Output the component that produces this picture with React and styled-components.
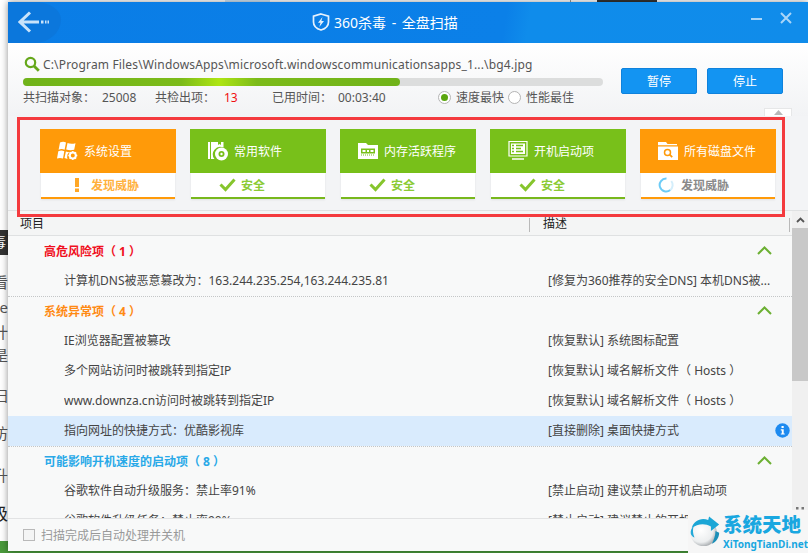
import React from 'react';
import styled, { createGlobalStyle } from 'styled-components';

const FONT = '"Noto Sans", "Noto Sans CJK SC", sans-serif';

const GlobalStyle = createGlobalStyle`
  html, body {
    margin: 0;
    padding: 0;
    background: #fff;
    overflow: hidden;
  }
  * {
    box-sizing: border-box;
  }
`;

const BackIcon = () => (
  <svg width="32" height="22" viewBox="0 0 32 22" fill="none">
    <path d="M12 1.500 2 11l10 9.500M3 11h18" stroke="#c9e3fa" strokeWidth="3" />
    <path d="M23 11h2.500M27 11h1.500M29.500 11h1.500" stroke="#c9e3fa" strokeWidth="3" />
  </svg>
);

const ShieldIcon = () => (
  <svg width="18" height="18" viewBox="0 0 18 18">
    <path d="M9 1 16.500 3.200V9c0 4-3 6.700-7.500 8C4.500 15.700 1.500 13 1.500 9V3.200z" fill="none" stroke="#e4f1fd" strokeWidth="1.700" />
    <path d="M10.500 4 6 9.700h2.500L7.300 14 12 8h-2.600z" fill="#e4f1fd" />
  </svg>
);

const SearchIcon = () => (
  <svg width="16" height="16" viewBox="0 0 16 16" fill="none">
    <circle cx="6.500" cy="6.500" r="4.700" stroke="#66a81c" strokeWidth="2.200" />
    <path d="m10 10 4.800 4.800" stroke="#66a81c" strokeWidth="2.800" />
  </svg>
);

const WindowsIcon = () => (
  <svg width="22" height="20" viewBox="0 0 22 20" fill="#fff">
    <path d="M3 1.500c2-.8 4-1 6 0L7.600 8.700c-2-.8-4-.8-6 0zM10.500 2c2.300.9 5 1.100 8 .2l-1.300 6.600c-2.800.7-5.300.6-8-.2zM1.300 10.200c2-.8 4-.8 6 0L6 17.500c-2-.8-4-.8-6 0zM8.900 10.500c1.300.4 2.300.6 3.300.7l-1.700 2-.4 3.200.4 1.500c-.9-.1-1.900-.4-3-.8z" />
    <circle cx="15.800" cy="14.500" r="3" fill="none" stroke="#fff" strokeWidth="2" />
    <path d="M15.800 10v1.500M15.800 17.500V19M11.300 14.500h1.500M18.800 14.500h1.500M12.600 11.300l1 1M18 16.700l1 1M12.600 17.700l1-1M18 12.300l1-1" stroke="#fff" strokeWidth="1.300" />
  </svg>
);

const DiscIcon = () => (
  <svg width="22" height="22" viewBox="0 0 22 22" fill="#fff">
    <path d="M1 2h2v17H1zM4 2h12.500v5.500a7.500 7.500 0 0 0-9 11.500H4z" />
    <path d="M11 2h3v3l-1.500-1L11 5z" fill="#78c01a" />
    <circle cx="14.500" cy="14" r="6.500" />
    <circle cx="14.500" cy="14" r="3" fill="#78c01a" />
    <circle cx="14.500" cy="14" r="1.200" fill="#fff" />
  </svg>
);

const MemoryIcon = () => (
  <svg width="22" height="18" viewBox="0 0 22 18">
    <path d="M1 1h8l2 2h10v14H1z" fill="#fff" />
    <path d="M4 6.500h14v5H4z" fill="#78c01a" />
    <path d="M5.500 8h3v2h-3zM10 8h2v2h-2zM13.500 8h3v2h-3z" fill="#fff" />
    <path d="M4 13h14" stroke="#78c01a" strokeDasharray="1 1" />
  </svg>
);

const MonitorIcon = () => (
  <svg width="22" height="22" viewBox="0 0 22 22" fill="none">
    <path d="M2 1.500h18v14.500H2z" stroke="#fff" strokeWidth="1.200" />
    <path d="M4 3.500h14v10.500H4z" fill="#fff" />
    <path d="M5 5.500h2M5 8.500h2M5 11.500h2M9 5.500h7M9 8.500h5M9 11.500h7" stroke="#78c01a" strokeWidth="1.500" />
    <path d="M5 19h12" stroke="#fff" strokeWidth="1.500" />
  </svg>
);

const FolderIcon = () => (
  <svg width="22" height="20" viewBox="0 0 22 20">
    <path d="M1 1h8l1.500 2H20v1.200H1z" fill="#fff" />
    <path d="M1 5.500h20V19H1z" fill="#fff" />
    <circle cx="10.500" cy="11.500" r="3" fill="none" stroke="#ff9a09" strokeWidth="1.500" />
    <path d="m12.700 13.700 2.500 2.500" stroke="#ff9a09" strokeWidth="1.800" />
  </svg>
);

const CheckIcon = () => (
  <svg width="17" height="14" viewBox="0 0 17 14" fill="none">
    <path d="m1.500 6.500 5 5 9-10" stroke="#86c52c" strokeWidth="3" />
  </svg>
);

const SpinnerIcon = () => (
  <svg width="16" height="16" viewBox="0 0 16 16" fill="none">
    <path d="M8.500 1.500a6.500 6.500 0 1 0 3.800 11.500" stroke="#6ccbf6" strokeWidth="2" />
    <path d="M12.300 13a6.500 6.500 0 0 0 1-9" stroke="#d4eefb" strokeWidth="2" />
  </svg>
);

const BangIcon = () => (
  <svg width="6" height="14" viewBox="0 0 6 14">
    <path d="M1 0h4v9H1zM1 10.500h4V14H1z" fill="#ffa726" />
  </svg>
);

const ChevronIcon = () => (
  <svg width="15" height="9" viewBox="0 0 15 9" fill="none">
    <path d="m1 8 6.500-6.500L14 8" stroke="#6cb033" strokeWidth="2" />
  </svg>
);

const InfoIcon = () => (
  <svg width="15" height="15" viewBox="0 0 15 15">
    <circle cx="7.500" cy="7.500" r="7.200" fill="#1d8af0" />
    <path d="M6.500 3h2.200v2H6.500zM5.800 6.200h2.900v4.200h1v1.200H5.800v-1.200h1V7.400h-1z" fill="#fff" />
  </svg>
);

const LogoIcon = () => (
  <svg width="35" height="36" viewBox="0 0 35 36">
    <defs>
      <radialGradient id="ball" cx="40%" cy="40%" r="70%">
        <stop offset="0%" stopColor="#ffffff" />
        <stop offset="65%" stopColor="#eceeef" />
        <stop offset="100%" stopColor="#8d9296" />
      </radialGradient>
    </defs>
    <circle cx="16" cy="20" r="14.500" fill="url(#ball)" />
    <path d="M3 15C5 7 13 3 21 6l1-4 11 9-9 7v-5C17 9 9 10 3 15z" fill="#1ba6d6" />
    <path d="M2 21c-.5-3 .5-6 3-8-1 3-1 8 1 12-2-.5-3.500-2-4-4z" fill="#23a9d8" />
    <path d="M29 18l4 2c0 5-3 10-8 12 2-4 4-9 4-14z" fill="#1b8fb8" />
  </svg>
);

const fragments = [
  { top: 272, text: '看' },
  { top: 297, text: 'e' },
  { top: 322, text: '计' },
  { top: 345, text: '是' },
  { top: 385, text: '扫' },
  { top: 423, text: '访' },
  { top: 465, text: '升' },
];

const tiles = [
  { name: '系统设置', Icon: WindowsIcon, tone: 'warn', status: '发现威胁', Mark: BangIcon, indent: 33, gap: 11 },
  { name: '常用软件', Icon: DiscIcon, tone: 'ok', status: '安全', Mark: CheckIcon, indent: 28, gap: 5 },
  { name: '内存活跃程序', Icon: MemoryIcon, tone: 'ok', status: '安全', Mark: CheckIcon, indent: 28, gap: 5 },
  { name: '开机启动项', Icon: MonitorIcon, tone: 'ok', status: '安全', Mark: CheckIcon, indent: 28, gap: 5 },
  { name: '所有磁盘文件', Icon: FolderIcon, tone: 'warn', status: '发现威胁', Mark: SpinnerIcon, indent: 17, gap: 7, pending: true },
];

const groups = [
  {
    title: '高危风险项（ 1 ）',
    colour: '#f0101e',
    items: [
      { name: '计算机DNS被恶意篡改为：163.244.235.254,163.244.235.81', desc: '[修复为360推荐的安全DNS] 本机DNS被...' },
    ],
  },
  {
    title: '系统异常项（ 4 ）',
    colour: '#ff8a14',
    items: [
      { name: 'IE浏览器配置被篡改', desc: '[恢复默认] 系统图标配置' },
      { name: '多个网站访问时被跳转到指定IP', desc: '[恢复默认] 域名解析文件（ Hosts ）' },
      { name: 'www.downza.cn访问时被跳转到指定IP', desc: '[恢复默认] 域名解析文件（ Hosts ）' },
      { name: '指向网址的快捷方式：优酷影视库', desc: '[直接删除] 桌面快捷方式', active: true },
    ],
  },
  {
    title: '可能影响开机速度的启动项（ 8 ）',
    colour: '#29a9e8',
    items: [
      { name: '谷歌软件自动升级服务：禁止率91%', desc: '[禁止启动] 建议禁止的开机启动项' },
      { name: '谷歌软件升级任务：禁止率90%', desc: '[禁止启动] 建议禁止的开机启动项' },
    ],
  },
];

const App = () => (
  <Desktop>
    <GlobalStyle />
    <Behind>
      <TopScrap $left={225} $width={45} $colour="#cfe4f5" />
      <TopScrap $left={570} $width={1} $colour="#999" />
      <TopScrap $left={597} $width={60} $colour="#333" />
      <DarkTab>毒</DarkTab>
      {fragments.map((f) => (
        <Fragment key={f.top} $top={f.top}>{f.text}</Fragment>
      ))}
      <BoldFragment>极</BoldFragment>
      <GreenCorner />
    </Behind>

    <Window>
      <TitleBar>
        <BackButton><BackIcon /></BackButton>
        <Title>
          <ShieldIcon />
          360杀毒 - 全盘扫描
        </Title>
        <WindowControls>
          <MinimizeButton />
          <CloseButton>
            <svg width="12" height="12" viewBox="0 0 12 12" fill="none">
              <path d="m1 1 10 10M11 1 1 11" stroke="#a9d5f8" strokeWidth="2" />
            </svg>
          </CloseButton>
        </WindowControls>
      </TitleBar>

      <ScanPanel>
        <ScanInfo>
          <PathRow>
            <SearchIcon />
            <span>C:\Program Files\WindowsApps\microsoft.windowscommunicationsapps_1...\bg4.jpg</span>
          </PathRow>
          <ProgressTrack>
            <ProgressFill style={{ width: `${(377 / 580) * 100}%` }} />
          </ProgressTrack>
          <StatsRow>
            <Stat $width={79}>共扫描对象：</Stat>
            <Stat $width={53}>25008</Stat>
            <Stat $width={69}>共检出项：</Stat>
            <Stat $width={48} $alert>13</Stat>
            <Stat $width={66}>已用时间：</Stat>
            <Stat $width={100}>00:03:40</Stat>
            <Radio $on />
            <RadioLabel>速度最快</RadioLabel>
            <Radio />
            <RadioLabel>性能最佳</RadioLabel>
          </StatsRow>
        </ScanInfo>
        <ScanActions>
          <ActionButton>暂停</ActionButton>
          <ActionButton>停止</ActionButton>
        </ScanActions>
        <CollapseTab>
          <svg width="9" height="5" viewBox="0 0 9 5"><path d="M4.500 0 9 5H0z" fill="#b8b8b8" /></svg>
        </CollapseTab>
      </ScanPanel>

      <TilesPanel>
        {tiles.map(({ name, Icon, Mark, tone, status, indent, gap, pending }) => (
          <Tile key={name}>
            <TileHead $tone={tone}>
              <TileIcon><Icon /></TileIcon>
              {name}
            </TileHead>
            <TileStatus $tone={tone} $indent={indent} $gap={gap} $pending={pending}>
              <Mark />
              {status}
            </TileStatus>
          </Tile>
        ))}
      </TilesPanel>

      <TableArea>
        <TableMain>
          <TableHead>
            <HeadName>项目</HeadName>
            <HeadDesc>描述</HeadDesc>
          </TableHead>
          <RowList>
            {groups.map((g, i) => (
              <Group key={g.title} $dotted={i < groups.length - 1}>
                <GroupRow $colour={g.colour}>
                  {g.title}
                  <GroupToggle><ChevronIcon /></GroupToggle>
                </GroupRow>
                {g.items.map((item) => (
                  <ItemRow key={item.name} $active={item.active}>
                    <ItemName>{item.name}</ItemName>
                    <ItemDesc>{item.desc}</ItemDesc>
                    {item.active && <ItemInfo><InfoIcon /></ItemInfo>}
                  </ItemRow>
                ))}
              </Group>
            ))}
          </RowList>
        </TableMain>
        <ScrollBar>
          <ScrollUp>
            <svg width="9" height="6" viewBox="0 0 9 6" fill="none">
              <path d="m1 5 3.500-3.500L8 5" stroke="#555" strokeWidth="1.800" />
            </svg>
          </ScrollUp>
          <ScrollThumb />
        </ScrollBar>
      </TableArea>

      <Footer>
        <CheckBox />
        扫描完成后自动处理并关机
      </Footer>
    </Window>

    <RedFrame />

    <Grip>
      <svg width="8" height="6" viewBox="0 0 8 6">
        <path d="M0 0h2.500v2.500H0zM5.500 0H8v2.500H5.500z" fill="#777" />
      </svg>
    </Grip>

    <Watermark>
      <LogoIcon />
      <WatermarkText>
        <WatermarkName>系统天地</WatermarkName>
        <WatermarkUrl>XiTongTianDi.net</WatermarkUrl>
      </WatermarkText>
    </Watermark>
  </Desktop>
);

const Desktop = styled.div`
  position: relative;
  width: 808px;
  height: 553px;
  padding: 2px 0 0 8px;
  overflow: hidden;
  font-family: ${FONT};
  font-size: 12px;
  background: #fff;
`;

const Behind = styled.div`
  position: absolute;
  inset: 0;
`;

const TopScrap = styled.div`
  position: absolute;
  top: 0;
  left: ${(p) => p.$left}px;
  width: ${(p) => p.$width}px;
  height: 2px;
  background: ${(p) => p.$colour};
`;

const DarkTab = styled.div`
  position: absolute;
  top: 230px;
  left: -8px;
  width: 16px;
  height: 25px;
  padding-top: 3px;
  background: #333;
  color: #fff;
  font-size: 14px;
  line-height: 18px;
`;

const Fragment = styled.div`
  position: absolute;
  top: ${(p) => p.$top}px;
  right: 800px;
  color: #555;
  font-size: 15px;
  line-height: 20px;
  white-space: nowrap;
`;

const BoldFragment = styled(Fragment)`
  top: 503px;
  color: #222;
  font-size: 17px;
  line-height: 22px;
`;

const GreenCorner = styled.div`
  position: absolute;
  left: 0;
  bottom: 0;
  width: 808px;
  height: 12px;
  background: #4a9a3c;
`;

const Window = styled.div`
  position: relative;
  display: flex;
  flex-direction: column;
  width: 800px;
  height: 549px;
  background: #f8f9f9;
  box-shadow: 0 0 7px rgba(0, 0, 0, 0.45);
`;

const TitleBar = styled.div`
  display: flex;
  flex: none;
  height: 41px;
  color: #fff;
  background: linear-gradient(100deg, #0a7de6 0%, #0b80e8 62%, #0f8ceb 65%, #108cea 100%);
`;

const BackButton = styled.div`
  display: flex;
  align-items: center;
  flex: none;
  width: 53px;
  height: 41px;
  padding: 0 0 2px 10px;
  background: #0b77dc;
  border-radius: 0 34px 34px 0 / 0 22px 30px 0;
`;

const Title = styled.div`
  display: flex;
  align-items: center;
  gap: 4px;
  margin-left: 251px;
  padding-bottom: 2px;
  font-size: 14px;
  word-spacing: 2px;
`;

const WindowControls = styled.div`
  display: flex;
  gap: 18px;
  margin-left: auto;
  padding: 9px 16px 0 0;
`;

const MinimizeButton = styled.div`
  width: 11px;
  height: 2px;
  margin-top: 7px;
  background: #a9d5f8;
`;

const CloseButton = styled.div`
  width: 12px;
  height: 12px;
`;

const ScanPanel = styled.div`
  position: relative;
  display: flex;
  flex: none;
  height: 73px;
  padding: 12px 0 0 15px;
  background: linear-gradient(#fff, #f2f3f5);
`;

const ScanInfo = styled.div`
  width: 580px;
`;

const PathRow = styled.div`
  display: flex;
  align-items: center;
  gap: 3px;
  height: 18px;
  padding-left: 1px;
  color: #555;
  font-size: 12px;
  letter-spacing: 0.16px;
  white-space: nowrap;
`;

const ProgressTrack = styled.div`
  height: 8px;
  margin-top: 5px;
  background: #dcdddd;
  border-radius: 4px;
`;

const ProgressFill = styled.div`
  height: 100%;
  background: linear-gradient(90deg, #70b31a 0%, #7cbb1a 42%, #aee513 52%, #7cbb1a 62%, #70b31a 100%);
  border-radius: 4px;
`;

const StatsRow = styled.div`
  display: flex;
  align-items: center;
  height: 14px;
  margin-top: 4px;
  color: #555;
  white-space: nowrap;
`;

const Stat = styled.span`
  flex: none;
  width: ${(p) => p.$width}px;
  color: ${(p) => (p.$alert ? '#f01010' : 'inherit')};
`;

const Radio = styled.span`
  display: flex;
  align-items: center;
  justify-content: center;
  flex: none;
  width: 13px;
  height: 13px;
  background: #fff;
  border: 1px solid #b4b4b4;
  border-radius: 50%;

  &::after {
    content: '';
    display: ${(p) => (p.$on ? 'block' : 'none')};
    width: 7px;
    height: 7px;
    background: #5aa60e;
    border-radius: 50%;
  }
`;

const RadioLabel = styled.span`
  margin: 0 4px 0 5px;
`;

const ScanActions = styled.div`
  display: flex;
  gap: 10px;
  margin: 13px 0 0 18px;
`;

const ActionButton = styled.button`
  width: 76px;
  height: 26px;
  padding: 0;
  color: #fff;
  font-family: ${FONT};
  font-size: 12px;
  background: #1394f2;
  border: 1px solid #0f82dc;
  border-radius: 2px;
`;

const CollapseTab = styled.div`
  position: absolute;
  right: 16px;
  bottom: 0;
  display: flex;
  align-items: center;
  justify-content: center;
  width: 28px;
  height: 8px;
  background: #fff;
  border: 1px solid #e6e7e8;
  border-bottom: 0;
`;

const TilesPanel = styled.div`
  display: flex;
  flex: none;
  gap: 14px;
  height: 95px;
  padding: 13px 0 0 32px;
  background: #f3f4f6;
  border-bottom: 1px solid #dfe1e2;
`;

const Tile = styled.div`
  width: 136px;
  height: 70px;
`;

const TileHead = styled.div`
  display: flex;
  align-items: center;
  gap: 5px;
  height: 44px;
  padding-left: 17px;
  color: #fff;
  background: ${(p) => (p.$tone === 'ok' ? '#78c01a' : '#ff9a09')};
`;

const TileIcon = styled.span`
  display: flex;
  align-items: center;
  width: 22px;
`;

const TileStatus = styled.div`
  display: flex;
  align-items: center;
  gap: ${(p) => p.$gap}px;
  height: 26px;
  margin: 0 1px;
  padding-left: ${(p) => p.$indent}px;
  color: ${(p) => {
    if (p.$pending) return '#8a8a8a';
    return p.$tone === 'ok' ? '#8ccb35' : '#ffb13d';
  }};
  font-weight: 700;
  background: #fff;
  border-bottom: 2px solid ${(p) => (p.$tone === 'ok' ? '#78b81c' : '#ff9a09')};
  box-shadow: 0 1px 2px rgba(0, 0, 0, 0.08);
`;

const TableArea = styled.div`
  display: flex;
  flex: 1;
  min-height: 0;
`;

const TableMain = styled.div`
  display: flex;
  flex-direction: column;
  flex: 1;
  min-width: 0;
`;

const TableHead = styled.div`
  display: grid;
  grid-template-columns: 521px 1fr;
  flex: none;
  height: 25px;
  color: #222;
  line-height: 26px;
  background: #f4f5f5;
  border-bottom: 1px solid #dfe1e2;
`;

const HeadName = styled.span`
  padding-left: 12px;
`;

const HeadDesc = styled.span`
  position: relative;
  padding-left: 14px;

  &::before,
  &::after {
    content: '';
    position: absolute;
    top: 7px;
    width: 1px;
    height: 14px;
    background: #b9b9b9;
  }

  &::before {
    left: 0;
  }

  &::after {
    right: 2px;
  }
`;

const RowList = styled.div`
  flex: 1;
  min-height: 0;
  overflow: hidden;
`;

const Group = styled.div`
  margin-bottom: -1px;
  border-bottom: 1px dotted ${(p) => (p.$dotted ? '#c4c6c7' : 'transparent')};
`;

const GroupRow = styled.div`
  display: flex;
  align-items: center;
  justify-content: space-between;
  height: 30px;
  padding: 0 20px 1px 36px;
  color: ${(p) => p.$colour};
  font-weight: 700;
`;

const GroupToggle = styled.span`
  display: flex;
`;

const ItemRow = styled.div`
  position: relative;
  display: grid;
  grid-template-columns: 484px 1fr;
  align-items: center;
  height: 30px;
  padding: 0 0 2px 56px;
  color: #444;
  background: ${(p) => (p.$active ? '#d9ebfd' : 'transparent')};
  white-space: nowrap;
`;

const ItemName = styled.span`
  overflow: hidden;
`;

const ItemDesc = styled.span`
  overflow: hidden;
`;

const ItemInfo = styled.span`
  position: absolute;
  right: 2px;
  top: 7px;
  display: flex;
`;

const ScrollBar = styled.div`
  display: flex;
  flex-direction: column;
  flex: none;
  width: 16px;
  background: #f0f0f0;
`;

const ScrollUp = styled.div`
  display: flex;
  align-items: center;
  justify-content: center;
  height: 17px;
`;

const ScrollThumb = styled.div`
  height: 153px;
  background: #c8c8c8;
`;

const Footer = styled.div`
  display: flex;
  align-items: center;
  flex: none;
  gap: 6px;
  height: 33px;
  padding-left: 15px;
  color: #999;
  font-size: 12px;
  background: #f8f9f9;
  border-top: 1px solid #e2e3e4;
`;

const CheckBox = styled.span`
  width: 12px;
  height: 12px;
  background: #f4f5f5;
  border: 1px solid #b9b9b9;
`;

const RedFrame = styled.div`
  position: absolute;
  top: 117px;
  left: 17px;
  width: 768px;
  height: 100px;
  border: 3px solid #f43a3e;
  pointer-events: none;
`;

const Grip = styled.div`
  position: absolute;
  top: 507px;
  left: 796px;
  display: flex;
`;

const Watermark = styled.div`
  position: absolute;
  right: 0;
  bottom: 0;
  display: flex;
  gap: 2px;
  width: 120px;
  height: 43px;
  padding: 3px 0 0 1px;
  background: #f6f6f6;
`;

const WatermarkText = styled.div`
  display: flex;
  flex-direction: column;
`;

const WatermarkName = styled.div`
  color: #19a7e0;
  font-size: 19.500px;
  font-weight: 900;
  line-height: 24px;
`;

const WatermarkUrl = styled.div`
  margin-top: 1px;
  color: #19a7e0;
  font-size: 10px;
  font-weight: 700;
  line-height: 12px;
  white-space: nowrap;
`;

export default App;
